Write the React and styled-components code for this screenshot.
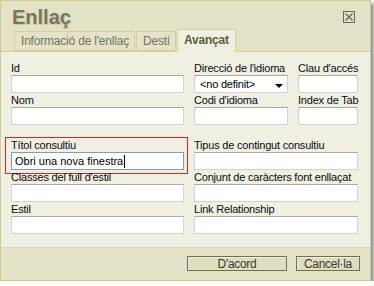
import React from "react";
import styled, { createGlobalStyle } from "styled-components";

const GlobalStyle = createGlobalStyle`
  html, body {
    margin: 0;
    padding: 0;
    background: #ffffff;
  }
  * {
    box-sizing: border-box;
  }
`;

const App = () => {
  return (
    <>
      <GlobalStyle />
      <Dialog>
        <TitleBar>
          <Title>Enllaç</Title>
          <CloseBox>
            <svg width="8" height="8" viewBox="0 0 8 8">
              <path d="M0.5 0.5 L7.5 7.5 M7.5 0.5 L0.5 7.5" stroke="#6b6b55" strokeWidth="1.3" />
            </svg>
          </CloseBox>
        </TitleBar>
        <Tabs>
          <Tab>Informació de l'enllaç</Tab>
          <Tab>Destí</Tab>
          <Tab $active>Avançat</Tab>
        </Tabs>
        <Panel>
          <Field>
            <Label>Id</Label>
            <Input />
          </Field>
          <Field>
            <Label>Direcció de l'idioma</Label>
            <Select>
              <span>&lt;no definit&gt;</span>
              <Arrow />
            </Select>
          </Field>
          <Field>
            <Label>Clau d'accés</Label>
            <Input />
          </Field>

          <Field>
            <Label>Nom</Label>
            <Input />
          </Field>
          <Field>
            <Label>Codi d'idioma</Label>
            <Input />
          </Field>
          <Field>
            <Label>Index de Tab</Label>
            <Input />
          </Field>

          <Field $gapTop>
            <Label>Títol consultiu</Label>
            <Input $focused>
              Obri una nova finestra<Caret />
            </Input>
            <Highlight />
          </Field>
          <Field $gapTop $wide>
            <Label>Tipus de contingut consultiu</Label>
            <Input />
          </Field>

          <Field>
            <Label>Classes del full d'estil</Label>
            <Input />
          </Field>
          <Field $wide>
            <Label>Conjunt de caràcters font enllaçat</Label>
            <Input />
          </Field>

          <Field>
            <Label>Estil</Label>
            <Input />
          </Field>
          <Field $wide>
            <Label>Link Relationship</Label>
            <Input />
          </Field>
        </Panel>
        <Footer>
          <Button $width={100}>D'acord</Button>
          <Button $width={64}>Cancel·la</Button>
        </Footer>
      </Dialog>
    </>
  );
};
export default App;

const Dialog = styled.div`
  width: 371px;
  height: 281px;
  display: flex;
  flex-direction: column;
  background: #e3e2c6;
  border: 1px solid #cfcc93;
  box-shadow: 3px 3px 4px rgba(0, 0, 0, 0.45);
  font-family: "Liberation Sans", Arial, sans-serif;
`;

const TitleBar = styled.div`
  height: 30px;
  display: flex;
  align-items: flex-start;
  justify-content: space-between;
  padding: 4px 15px 0 11px;
`;

const Title = styled.div`
  font-size: 20px;
  font-weight: bold;
  color: #77775a;
  text-shadow: 1px 1px 0 #c9c7a6;
  line-height: 24px;
`;

const CloseBox = styled.div`
  margin-top: 6px;
  width: 12px;
  height: 12px;
  border: 1px solid #6b6b55;
  display: flex;
  align-items: center;
  justify-content: center;
`;

const Tabs = styled.div`
  height: 21px;
  display: flex;
  align-items: flex-end;
  gap: 1px;
  padding-left: 13px;
  border-bottom: 1px solid #d3d09c;
`;

const Tab = styled.div`
  height: ${(p) => (p.$active ? "23px" : "20px")};
  margin-bottom: ${(p) => (p.$active ? "-1px" : "0")};
  padding: ${(p) => (p.$active ? "3px 6px 0 6px" : "2px 5px 0 6px")};
  background: ${(p) => (p.$active ? "#f0f0e2" : "#e4e3c8")};
  border: 1px solid #d3d09c;
  border-bottom: ${(p) => (p.$active ? "none" : "1px solid #d3d09c")};
  color: ${(p) => (p.$active ? "#5c5c44" : "#73735c")};
  font-size: 12px;
  font-weight: ${(p) => (p.$active ? "bold" : "normal")};
  letter-spacing: -0.2px;
  white-space: nowrap;
`;

const Panel = styled.div`
  flex: 1;
  background: #f0f0e2;
  display: grid;
  grid-template-columns: 173px 94px 60px;
  grid-auto-rows: min-content;
  column-gap: 10px;
  row-gap: 1px;
  padding: 10px 0 0 10px;
`;

const Field = styled.div`
  position: relative;
  display: flex;
  flex-direction: column;
  grid-column: ${(p) => (p.$wide ? "span 2" : "auto")};
  margin-top: ${(p) => (p.$gapTop ? "13px" : "0")};
`;

const Highlight = styled.div`
  position: absolute;
  top: -2px;
  left: -6px;
  right: -4px;
  bottom: -4px;
  border: 1px solid rgb(230, 30, 40);
  pointer-events: none;
`;

const Label = styled.div`
  height: 13px;
  line-height: 13px;
  font-size: 11px;
  letter-spacing: -0.2px;
  color: #0a0a14;
  white-space: nowrap;
`;

const Input = styled.div`
  height: 18px;
  background: #ffffff;
  border: 1px solid ${(p) => (p.$focused ? "#7f9db9" : "#d4d4cc")};
  border-top-color: ${(p) => (p.$focused ? "#7f9db9" : "#a9a9a2")};
  padding-left: 3px;
  display: flex;
  align-items: center;
  font-size: 11px;
  color: #000;
  white-space: nowrap;
`;

const Caret = styled.span`
  display: inline-block;
  width: 1px;
  height: 13px;
  margin-left: 1px;
  background: #000;
`;

const Select = styled(Input)`
  justify-content: space-between;
  padding: 0 4px 0 5px;
  letter-spacing: -0.2px;
`;

const Arrow = styled.span`
  width: 0;
  height: 0;
  margin-top: 3px;
  border-left: 4px solid transparent;
  border-right: 4px solid transparent;
  border-top: 4px solid #000;
`;

const Footer = styled.div`
  height: 33px;
  display: flex;
  justify-content: flex-end;
  align-items: flex-start;
  gap: 9px;
  padding: 8px 10px 0 0;
  border-top: 1px solid #dad8b4;
`;

const Button = styled.div`
  width: ${(p) => p.$width}px;
  height: 15px;
  border: 1px solid #6f6f52;
  box-shadow: inset 1px 1px 0 #f0efde;
  background: #deddc0;
  display: flex;
  align-items: center;
  justify-content: center;
  font-size: 12px;
  letter-spacing: -0.3px;
  color: #3a3a28;
`;
